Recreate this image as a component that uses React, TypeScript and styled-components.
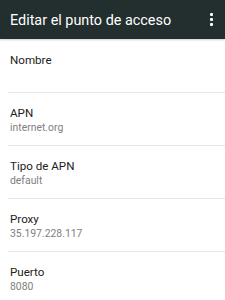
import styled, { createGlobalStyle } from "styled-components";

const GlobalStyle = createGlobalStyle`
  html, body {
    margin: 0;
    padding: 0;
    background: #ffffff;
    font-family: Roboto, "Noto Sans", sans-serif;
  }
`;

const Screen = styled.div`
  width: 225px;
  height: 300px;
  overflow: hidden;
  background: #ffffff;
`;

const Toolbar = styled.div`
  height: 39px;
  background: #232e2e;
  display: flex;
  align-items: center;
  justify-content: space-between;
  padding: 0 10px 0 10px;
  box-sizing: border-box;
  box-shadow: 0 1px 2px rgba(0, 0, 0, 0.2);
`;

const Title = styled.div`
  color: #ffffff;
  font-size: 14.4px;
  line-height: 18px;
  margin-top: 2px;
`;

const Kebab = styled.div`
  display: flex;
  flex-direction: column;
  gap: 2.5px;
  margin-right: 2px;
  span {
    width: 2.6px;
    height: 2.6px;
    background: #ffffff;
    border-radius: 1px;
  }
`;

const List = styled.div`
  display: flex;
  flex-direction: column;
  padding-top: 1px;
`;

const Row = styled.div`
  height: 53px;
  box-sizing: border-box;
  padding: 13px 10px 0 2px;
  margin-left: 8px;
  border-bottom: 1px solid #e8e8e8;
`;

const Label = styled.div`
  font-size: 11.6px;
  line-height: 14px;
  color: #212121;
`;

const Value = styled.div`
  font-size: 10.4px;
  line-height: 13px;
  margin-top: 1px;
  color: #808080;
  min-height: 13px;
`;

const fields = [
  { label: "Nombre", value: "" },
  { label: "APN", value: "internet.org" },
  { label: "Tipo de APN", value: "default" },
  { label: "Proxy", value: "35.197.228.117" },
  { label: "Puerto", value: "8080" },
];

export default function App() {
  return (
    <Screen>
      <GlobalStyle />
      <Toolbar>
        <Title>Editar el punto de acceso</Title>
        <Kebab>
          <span />
          <span />
          <span />
        </Kebab>
      </Toolbar>
      <List>
        {fields.map((f) => (
          <Row key={f.label}>
            <Label>{f.label}</Label>
            <Value>{f.value}</Value>
          </Row>
        ))}
      </List>
    </Screen>
  );
}
